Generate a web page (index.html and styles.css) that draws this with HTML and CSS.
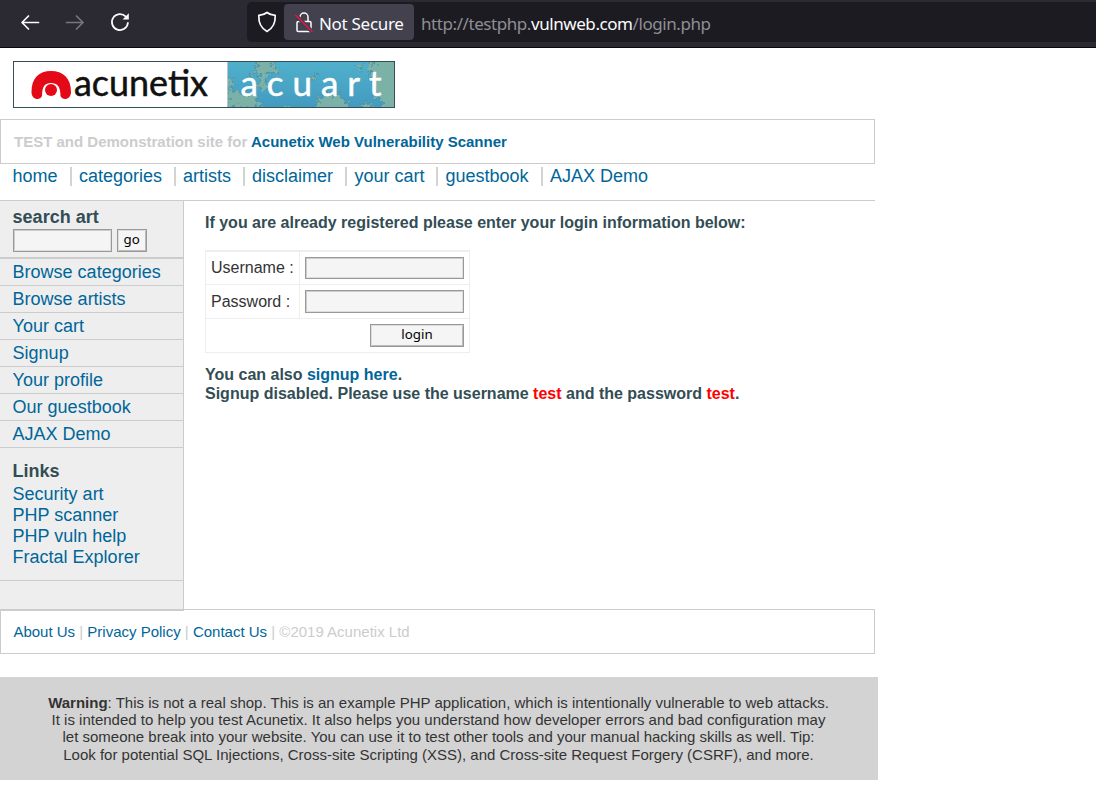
FILE: index.html
```
<!DOCTYPE html>
<html lang="en">
<head>
<meta charset="utf-8">
<title>login page</title>
<link rel="stylesheet" href="styles.css">
</head>
<body>
<header class="chrome">
  <div class="controls">
    <svg class="icon" width="20" height="20" viewBox="0 0 20 20"><path d="M18.500 10.500H2.500M8.500 4 2 10.500 8.500 17" stroke="#fbfbfe"/></svg>
    <svg class="icon" width="20" height="20" viewBox="0 0 20 20"><path d="M1.500 10.500h16M11.500 4 18 10.500 11.500 17" stroke="#77767d"/></svg>
    <svg class="icon" width="20" height="20" viewBox="0 0 20 20"><path d="M17.900 10.800A8 8 0 1 1 15.800 4.600" stroke="#fbfbfe"/><path d="M18.800 1.200v6.200h-6.200z" fill="#fbfbfe"/></svg>
  </div>
  <div class="urlbar">
    <svg class="icon shield" width="20" height="22" viewBox="0 0 20 22"><path d="M10 1.500C12 3.200 15 4.200 18.200 4.400C18.500 11 16.500 17 10 20.400C3.500 17 1.500 11 1.800 4.400C5 4.200 8 3.200 10 1.500z" stroke="#fbfbfe"/></svg>
    <div class="badge">
      <svg class="icon lock" width="18" height="21" viewBox="0 0 18 21"><path d="M5 9.500V5a4 4 0 0 1 8 0v4.500M3.300 9.500h11.400a1.300 1.300 0 0 1 1.300 1.300v7.400a1.300 1.300 0 0 1-1.300 1.300H3.300A1.300 1.300 0 0 1 2 18.200v-7.400a1.300 1.300 0 0 1 1.300-1.300z" stroke="#fbfbfe"/><path d="M.8 3.200 17 19.500" stroke="#42414d" stroke-width="4"/><path d="M.8 3.200 17 19.500" stroke="#e31547" stroke-width="1.600"/></svg>
      <span class="secure">Not Secure</span>
    </div>
    <span class="url">http://testphp.<b>vulnweb.com</b>/login.php</span>
  </div>
</header>

<main class="page">
  <svg class="logo" width="382" height="47" viewBox="0 0 382 47">
    <defs>
      <linearGradient id="sea" x1="0" y1="0" x2="0" y2="1"><stop offset="0" stop-color="#50b0cb"/><stop offset="1" stop-color="#439bc0"/></linearGradient>
      <filter id="jag" x="-10%" y="-10%" width="120%" height="120%"><feTurbulence type="fractalNoise" baseFrequency=".22" numOctaves="3" seed="4"/><feDisplacementMap in="SourceGraphic" scale="12" xChannelSelector="R" yChannelSelector="G"/><feGaussianBlur stdDeviation=".4"/></filter>
      <clipPath id="art"><rect x="215" y="1" width="166" height="45"/></clipPath>
    </defs>
    <rect width="382" height="47" fill="#fff"/>
    <g clip-path="url(#art)">
      <rect x="215" y="1" width="166" height="45" fill="url(#sea)"/>
      <g filter="url(#jag)" fill="#7bb1a8" stroke="#4b91a6" stroke-width="1">
        <path d="M243 0h17l-2 5 9 4-4 5-8-3-3 9 4 6-6 5-5-6 2-11-10-2 8-4z"/>
        <path d="M215 15l5 4-2 8 8 5 8-4-1 8 12-3-2 6 8 8h-36z"/>
        <path d="M301 50l4-13 6 1 2-8 7 5 6-4 3 8 8 1-4 10z"/>
        <path d="M386 -2h-20l-5 6-10-2 7 7-4 4 8 3-4 8 6 5-2 8 9 4-3 9h18z"/>
        <path d="M352 50l-5-7 6-3 5 3 3 7zM345 2l5 3-2 3-6-3zM303 11l-5 7 4 1 2-7zM270 48l4-5 4 2-4 5z"/>
      </g>
      <text class="art" x="227.500" y="34.500" textLength="141">acuart</text>
    </g>
    <path d="M18.500 31C18.500 17 26 10 38 10s20 7 20 21c0 8-8.500 9-10.500 4C47.500 25 44 22 38 22s-9 3-9 13c-2 5-10.500 4-10.500-4z" fill="#e30917"/>
    <circle cx="38" cy="29" r="6" fill="#e30917"/>
    <text class="brand" x="61" y="35" textLength="134" lengthAdjust="spacingAndGlyphs">acunetix</text>
    <path d="M214.500 1v45" stroke="#b9c4c8"/>
    <rect x=".5" y=".5" width="381" height="46" fill="none" stroke="#354f59"/>
  </svg>

  <h1 class="tagline">TEST and Demonstration site for <a>Acunetix Web Vulnerability Scanner</a></h1>

  <nav class="menu">
    <a class="n1">home</a><a class="n2">categories</a><a class="n3">artists</a><a class="n4">disclaimer</a><a class="n5">your cart</a><a class="n6">guestbook</a><a class="n7">AJAX Demo</a>
  </nav>

  <div class="columns">
    <aside class="sidebar">
      <form class="search">
        <h3>search art</h3>
        <div class="search-row"><input class="field" type="text"><button class="btn" type="button">go</button></div>
      </form>
      <ul class="sections">
        <li><a>Browse categories</a></li><li><a>Browse artists</a></li><li><a>Your cart</a></li><li><a>Signup</a></li><li><a>Your profile</a></li><li><a>Our guestbook</a></li><li><a>AJAX Demo</a></li>
      </ul>
      <div class="links">
        <h3>Links</h3>
        <a>Security art</a><a>PHP scanner</a><a>PHP vuln help</a><a>Fractal Explorer</a>
      </div>
    </aside>
    <section class="content">
      <h2 class="msg intro">If you are already registered please enter your login information below:</h2>
      <form class="login">
        <div class="row"><label>Username :</label><div class="cell"><input class="field" type="text"></div></div>
        <div class="row"><label>Password :</label><div class="cell"><input class="field" type="password"></div></div>
        <div class="row submit"><button class="btn" type="button">login</button></div>
      </form>
      <h2 class="msg also">You can also <a>signup here</a>.</h2>
      <h2 class="msg disabled">Signup disabled. Please use the username <em>test</em> and the password <em>test</em>.</h2>
    </section>
  </div>

  <footer class="footer"><a>About Us</a> | <a>Privacy Policy</a> | <a>Contact Us</a> | ©2019 Acunetix Ltd</footer>

  <div class="warning"><b>Warning</b>: This is not a real shop. This is an example PHP application, which is intentionally vulnerable to web attacks.<br>It is intended to help you test Acunetix. It also helps you understand how developer errors and bad configuration may<br>let someone break into your website. You can use it to test other tools and your manual hacking skills as well. Tip:<br>Look for potential SQL Injections, Cross-site Scripting (XSS), and Cross-site Request Forgery (CSRF), and more.</div>
</main>
</body>
</html>
```
FILE: styles.css
```
* { box-sizing: border-box; }
body { margin: 0; background: #fff; color: #333; font-family: "Liberation Sans", Arial, sans-serif; overflow: hidden; }
h1, h2, h3, ul { margin: 0; padding: 0; }
a { color: #069; text-decoration: none; }

.chrome { display: flex; height: 48px; background: #2b2a33; border-bottom: 1px solid #09080c; }
.controls { display: flex; gap: 25px; width: 247px; padding: 12px 0 0 20px; }
.icon { display: block; flex: none; fill: none; stroke-width: 1.7; stroke-linecap: round; stroke-linejoin: round; }
.urlbar { display: flex; align-items: center; flex: 1; height: 40px; margin-top: 2px; background: #1c1b22; border-radius: 5px 0 0 5px; font: 17px/24px "Noto Sans", "Open Sans", sans-serif; }
.shield { margin-left: 10px; }
.badge { display: flex; align-items: center; width: 130px; height: 36px; margin-left: 7px; padding-left: 11px; background: #42414d; border-radius: 4px; color: #fbfbfe; }
.lock { stroke-width: 1.5; }
.secure { margin: 4px 0 0 6px; font-size: 17px; letter-spacing: -.3px; white-space: nowrap; }
.url { margin: 4px 0 0 7px; color: #8f8e94; letter-spacing: -.43px; white-space: nowrap; }
.url b { color: #fbfbfe; font-weight: 400; }

.page { width: 878px; }
.logo { display: block; margin: 13px 0 11px 13px; }
.brand { font: 36px Lato, sans-serif; fill: #111; stroke: #111; stroke-width: .5px; }
.art { font: 35px Lato, sans-serif; fill: #fff; stroke: #fff; stroke-width: .5px; }
.tagline { width: 875px; height: 45px; padding-left: 13px; border: 1px solid #ccc; color: #ccc; font-size: 15px; line-height: 44px; }
.menu { display: flex; width: 875px; height: 37px; padding: 3px 0 0 12.6px; border-bottom: 1px solid #ccc; font-size: 18px; line-height: 18px; }
.menu a { height: 19px; border-right: 2px solid #d3d3d3; white-space: nowrap; }
.n1 { width: 59.4px; }
.n2, .n3, .n4, .n5, .n6, .n7 { padding-left: 7px; }
.n2 { width: 104px; }
.n3 { width: 69px; }
.n4 { width: 102.5px; }
.n5 { width: 91px; }
.n6 { width: 104.5px; }
.menu .n7 { border: 0; }

.columns { display: flex; height: 408px; }
.sidebar { width: 184px; height: 410px; background: #eee; border-right: 1px solid #ccc; border-bottom: 2px solid #ccc; font-size: 18px; }
.sidebar h3 { color: #334d55; font-size: 18px; line-height: 21px; }
.search { height: 58px; padding: 6px 0 0 12.6px; border-bottom: 2px solid #ccc; }
.search-row { display: flex; gap: 5px; margin-top: 1px; }
.field, .btn { margin: 0; padding: 0; height: 23px; background: #f5f5f5; border: 1px solid #999; border-radius: 0; outline: 0; }
.field { box-shadow: inset -1px -1px #ddd, inset 1px 1px #ccc; }
.btn { box-shadow: inset 1px 1px #ddd, inset -1px -1px #bbb; color: #000; font: 13.3px "Noto Sans", "Open Sans", sans-serif; line-height: 19px; padding-bottom: 2px; }
.search .field { width: 99px; }
.search .btn { width: 30px; }
.sections { list-style: none; }
.sections li { height: 27px; padding-left: 12.6px; border-bottom: 1px solid #ccc; line-height: 26px; }
.links { display: flex; flex-direction: column; height: 133px; padding: 13px 0 0 12.6px; border-bottom: 1px solid #ccc; line-height: 21px; }
.links h3 { margin-bottom: 2px; }
.content { padding: 12px 0 0 21px; }
.msg { color: #334d55; font-size: 16px; line-height: 19px; white-space: nowrap; }
.msg em { color: #f00; font-style: normal; }
.intro { margin-bottom: 18px; }
.login { width: 265px; height: 103px; border: 1px solid #eee; border-top-width: 2px; font-size: 16px; }
.row { display: flex; height: 34px; border-bottom: 1px solid #eee; }
.row label { width: 94px; padding-left: 5px; border-right: 1px solid #eee; line-height: 33px; }
.row:first-child { height: 33px; }
.row:first-child label { line-height: 31px; }
.cell { padding: 5px; }
.cell .field { display: block; width: 159px; height: 22px; }
.row:nth-child(2) .field { height: 23px; }
.submit { justify-content: flex-end; padding: 5px 5px 0 0; border: 0; }
.submit .btn { width: 94px; }
.also { margin-top: 12px; }

.footer { width: 875px; height: 45px; padding-left: 12.4px; border: 1px solid #ccc; color: #ccc; font-size: 15px; line-height: 44px; }
.warning { width: 878px; height: 103px; margin-top: 23px; padding-top: 16.6px; padding-right: 1px; background: #d3d3d3; font-size: 15px; line-height: 17.4px; text-align: center; white-space: nowrap; }
```
